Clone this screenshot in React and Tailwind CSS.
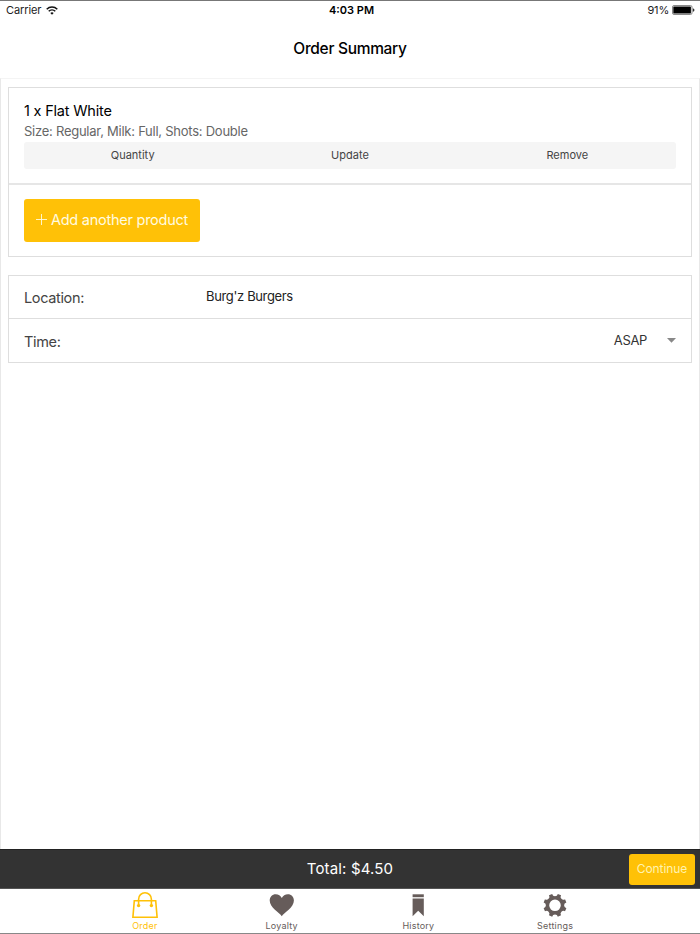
const actions = ['Quantity', 'Update', 'Remove'];

function WifiIcon() {
  return (
    <svg width="12" height="9" viewBox="0 0 12 9" fill="none" stroke="#111" strokeWidth="1.5">
      <path d="M0.7 3.2a7.6 7.6 0 0 1 10.6 0" />
      <path d="M2.7 5.3a4.7 4.7 0 0 1 6.6 0" />
      <path d="M6 8.7 4.3 7a2.4 2.4 0 0 1 3.4 0z" fill="#111" stroke="none" />
    </svg>
  );
}

function BatteryIcon() {
  return (
    <svg width="23" height="10" viewBox="0 0 23 10">
      <rect x="0.5" y="0.5" width="19.5" height="9" rx="1.5" fill="#fff" stroke="#8a8a8a" />
      <rect x="1.3" y="1.4" width="17.6" height="7.2" rx="0.6" fill="#000" />
      <path d="M20.8 3.2q1.7 0.4 1.7 1.8t-1.7 1.8z" fill="#333" />
    </svg>
  );
}

function BagIcon() {
  return (
    <svg width="26" height="27" viewBox="0 0 26 27" fill="none" stroke="currentColor" strokeWidth="1.6">
      <path d="M2.3 8.7h21.4l1.4 16.5H0.9z" />
      <path d="M6.6 13.5V7.2a6.2 6.2 0 0 1 12.8 0v6.300" />
      <circle cx="6.600" cy="13.600" r="1.700" fill="currentColor" stroke="none" />
      <circle cx="19.400" cy="13.600" r="1.700" fill="currentColor" stroke="none" />
    </svg>
  );
}

function HeartIcon() {
  return (
    <svg width="26" height="27" viewBox="0 0 26 27" fill="currentColor">
      <path d="M12.800 24.200C10.600 21 0.700 15.600 0.700 8.600 0.700 5 3.300 2.300 6.700 2.300c2.700 0 5 1.500 6.100 3.700 1.100-2.200 3.400-3.700 6.100-3.700 3.400 0 6 2.700 6 6.300 0 7-9.900 12.400-12.100 15.600z" />
    </svg>
  );
}

function BookmarkIcon() {
  return (
    <svg width="26" height="27" viewBox="0 0 26 27" fill="currentColor">
      <path d="M7.600 2.300h11.200v2.900H7.600z" />
      <path d="M7.600 6.600h11.200v17.600l-5.600-5.400-5.600 5.400z" />
    </svg>
  );
}

// eight teeth, with a round notch between each pair
function gearPath() {
  const point = (deg) => {
    const a = (deg * Math.PI) / 180;
    return `${(13 + 11.7 * Math.sin(a)).toFixed(2)} ${(13.3 - 11.7 * Math.cos(a)).toFixed(2)}`;
  };
  let d = `M${point(-14)}`;
  for (let i = 0; i < 8; i++) {
    const deg = i * 45;
    d += `A2.9 2.9 0 0 0 ${point(deg + 14)}L${point(deg + 31)}`;
  }
  return d + 'Z M13 7.500a5.800 5.800 0 1 0 0 11.600a5.800 5.800 0 1 0 0-11.600z';
}

function GearIcon() {
  return (
    <svg width="26" height="27" viewBox="0 0 26 27" fill="currentColor">
      <path fillRule="evenodd" d={gearPath()} />
    </svg>
  );
}

const tabs = [
  { label: 'Order', Icon: BagIcon, active: true },
  { label: 'Loyalty', Icon: HeartIcon },
  { label: 'History', Icon: BookmarkIcon },
  { label: 'Settings', Icon: GearIcon },
];

function StatusBar() {
  return (
    <div className="grid h-[18px] grid-cols-3 items-center pr-[5px] pl-[6px] text-[11px] leading-none text-[#222]">
      <div className="flex items-center gap-[5px]">
        <span className="tracking-[-0.1px]">Carrier</span>
        <WifiIcon />
      </div>
      <div className="pl-[2px] text-center font-semibold text-black">4:03 PM</div>
      <div className="flex items-center justify-end gap-[3px]">
        <span className="tracking-[-0.2px]">91%</span>
        <BatteryIcon />
      </div>
    </div>
  );
}

export default function App() {
  return (
    <div className="flex h-[934px] w-[700px] flex-col overflow-hidden border-t border-b border-t-[#777] border-b-[#888] bg-white font-['Inter',sans-serif]">
      <header className="h-[77px] shrink-0">
        <StatusBar />
        <h1 className="pt-[19px] text-center text-[15.500px] leading-[22px] font-medium tracking-[-0.3px] text-black">
          Order Summary
        </h1>
      </header>

      <main className="flex-1 border-x border-t border-x-[#e8e8e8] border-t-[#f4f4f4] px-[7px] pt-2">
        <section className="border border-[#dedede]">
          <div className="h-[97px] border-b-2 border-[#e6e6e6] px-[15px] pt-[13px]">
            <h2 className="text-[14.500px] leading-5 tracking-[-0.2px] text-black">1 x Flat White</h2>
            <p className="text-[13px] leading-5 tracking-[-0.25px] text-[#666]">
              Size: Regular, Milk: Full, Shots: Double
            </p>
            <div className="mt-px grid h-[27px] grid-cols-3 items-center rounded-[3px] bg-[#f5f5f5] text-center text-[11px] text-[#444]">
              {actions.map((action) => (
                <button key={action}>{action}</button>
              ))}
            </div>
          </div>
          <div className="h-[71px] px-[15px] pt-[14px]">
            <button className="flex h-[43px] w-[176px] items-center justify-center gap-[4px] rounded-[3px] bg-[#ffc107] pb-[2px] text-[14.500px] tracking-[-0.25px] text-[#fffbe0]">
              <svg width="11" height="11" viewBox="0 0 11 11" stroke="currentColor" strokeWidth="0.9">
                <path d="M5.500 0v11M0 5.500h11" />
              </svg>
              <span>Add another product</span>
            </button>
          </div>
        </section>

        <section className="mt-[18px] border border-[#dedede]">
          <div className="flex h-[43px] items-center border-b border-[#dedede] px-[15px]">
            <span className="w-[182px] pt-[2px] text-[14.500px] tracking-[-0.35px] text-[#444]">Location:</span>
            <span className="text-[13px] tracking-[-0.35px] text-[#222]">Burg'z Burgers</span>
          </div>
          <div className="flex h-[43px] items-center px-[15px]">
            <span className="pt-[2px] text-[14.500px] tracking-[-0.35px] text-[#444]">Time:</span>
            <span className="ml-auto text-[13px] tracking-[-0.35px] text-[#333]">ASAP</span>
            <svg className="ml-5" width="9" height="5" viewBox="0 0 9 5">
              <path d="M0 0h9L4.500 4.800z" fill="#888" />
            </svg>
          </div>
        </section>
      </main>

      <div className="grid h-[40px] shrink-0 grid-cols-3 items-center border-t border-b border-t-[#222] border-b-[#555] bg-[#333] pr-[5px] pl-[5px]">
        <span className="col-start-2 text-center text-[15px] tracking-[0.15px] text-white">Total: $4.50</span>
        <button className="h-[31px] w-[66px] justify-self-end rounded-[3px] bg-[#ffc107] text-[12px] tracking-[-0.1px] text-[#fff3b0]">
          Continue
        </button>
      </div>

      <nav className="grid h-[44px] shrink-0 grid-cols-4 px-[76.500px] pt-[3px]">
        {tabs.map(({ label, Icon, active }) => (
          <a
            key={label}
            className={
              active
                ? 'flex flex-col items-center text-[#ffc107]'
                : 'flex flex-col items-center text-[#665c5a]'
            }
          >
            <Icon />
            <span className="text-[9px] leading-[13px] tracking-[0.200px]">{label}</span>
          </a>
        ))}
      </nav>
    </div>
  );
}
